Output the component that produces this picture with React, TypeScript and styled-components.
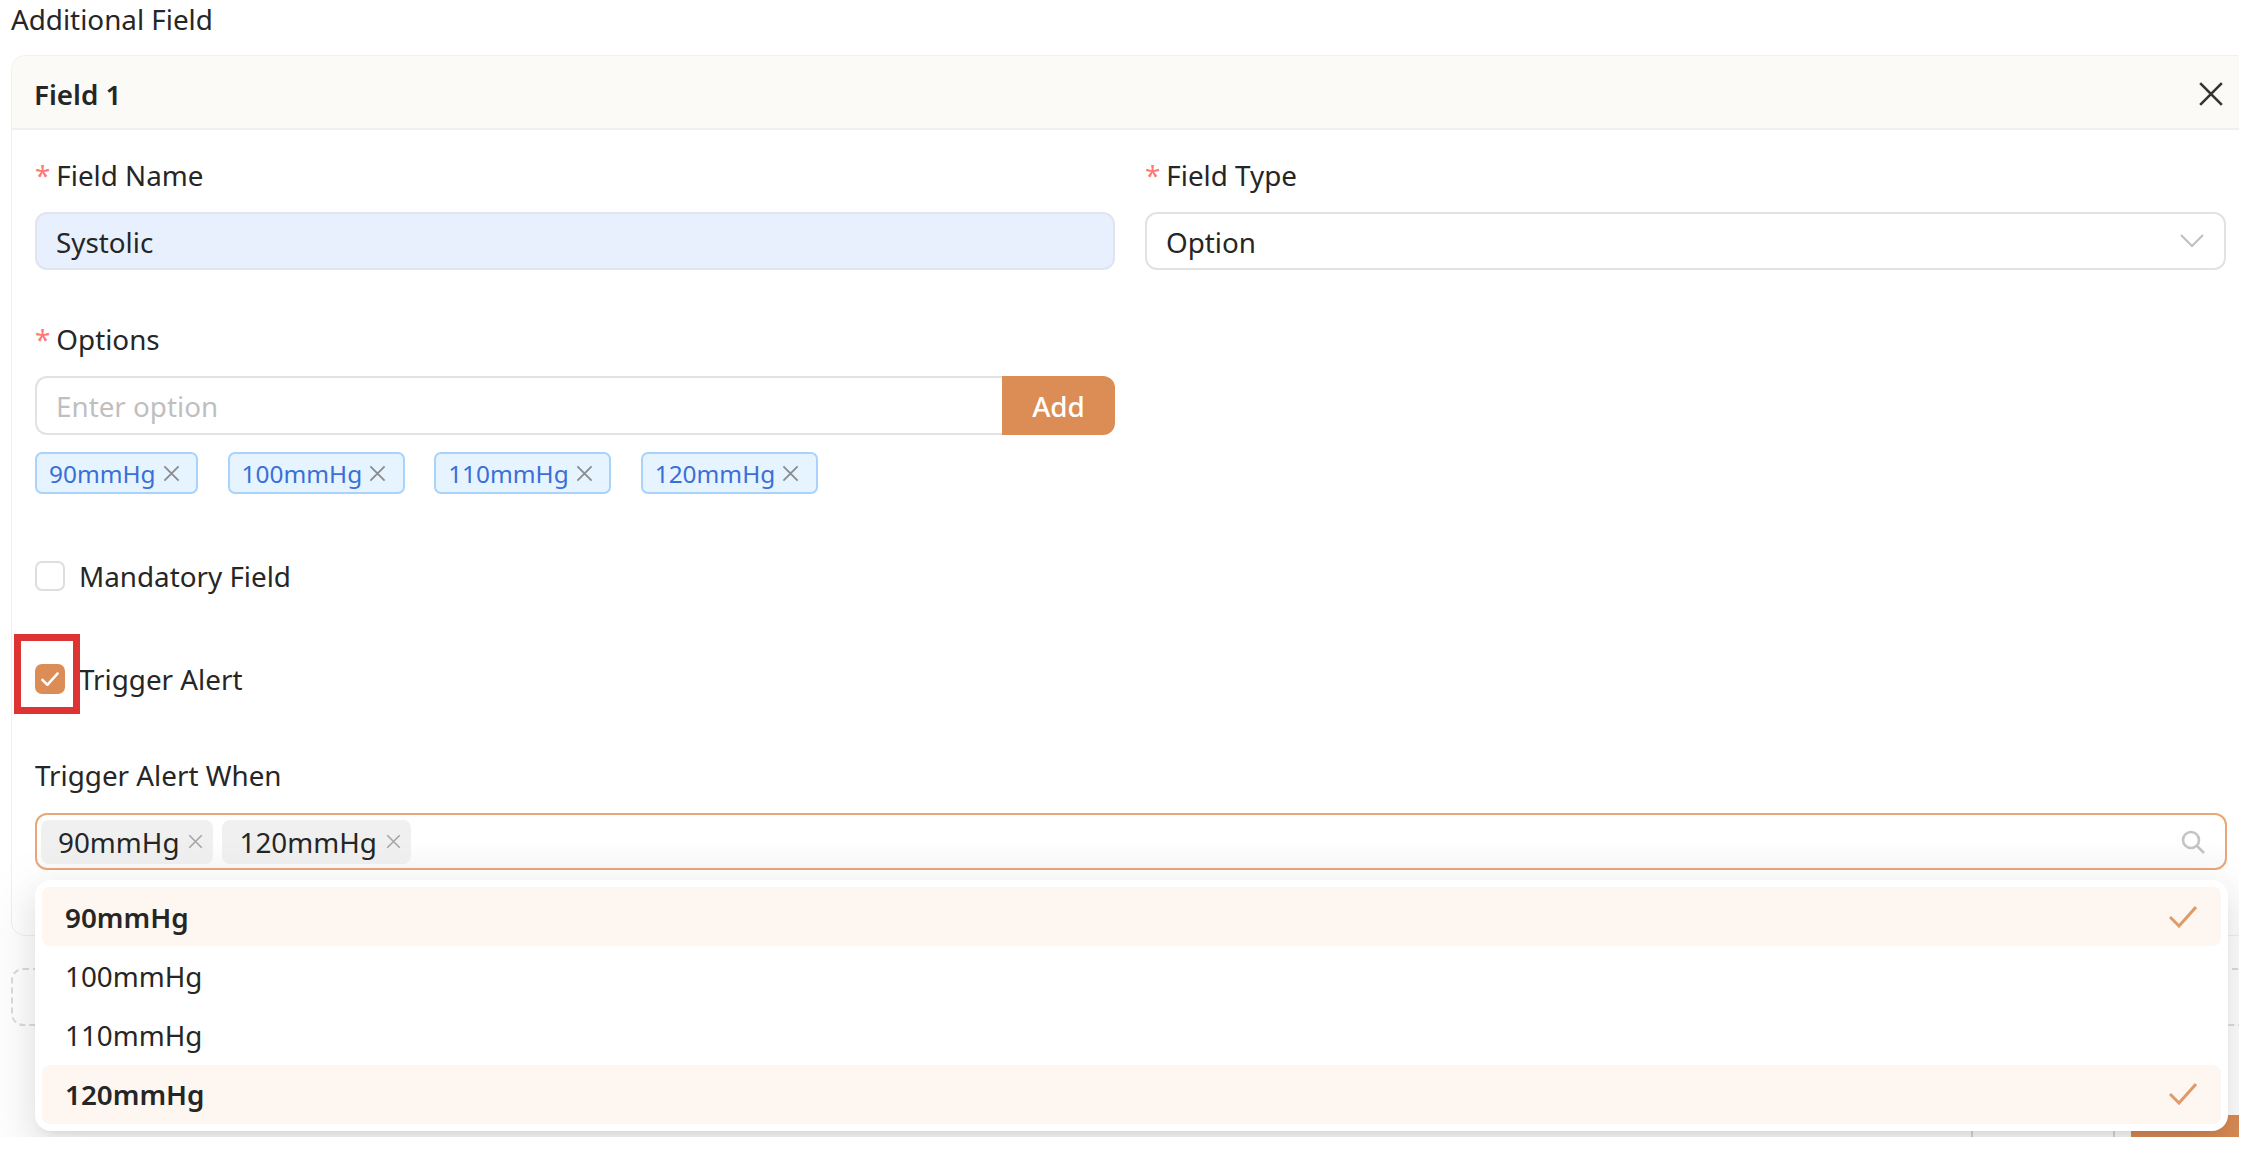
import React from 'react';
import styled, { createGlobalStyle } from 'styled-components';

const orange = '#dc8d55';

const GlobalStyle = createGlobalStyle`
  html, body {
    margin: 0;
    background: #fff;
    overflow: hidden;
  }
  * {
    box-sizing: border-box;
  }
`;

const Shot = styled.div`
  width: 2239px;
  height: 1137px;
  padding-left: 11px;
  overflow: hidden;
  font-family: 'Noto Sans', 'Open Sans', sans-serif;
  font-size: 27.8px;
  color: #262626;
`;

const Inner = styled.div`
  width: 2240px;
`;

const Title = styled.div`
  height: 38px;
  line-height: 38px;
  margin-bottom: 17px;
`;

const Card = styled.div`
  border: 1px solid #f0f0f0;
  border-radius: 14px;
`;

const CardHeader = styled.div`
  height: 74px;
  padding: 3px 26px 0 22px;
  display: flex;
  align-items: center;
  justify-content: space-between;
  background: #fbfaf6;
  border-bottom: 2px solid #f0f0f0;
  border-radius: 14px 14px 0 0;
  font-weight: 600;
`;

const CardBody = styled.div`
  padding: 27px 23px 65px;
`;

const TwoCols = styled.div`
  display: grid;
  grid-template-columns: 1080px 1081px;
  column-gap: 30px;
`;

const FormItem = styled.div`
  margin-bottom: 51px;
`;

const Label = styled.div`
  height: 36px;
  line-height: 36px;
  margin-bottom: 19px;
`;

const SelectLabel = styled(Label)`
  margin-bottom: 20px;
`;

const Required = styled.span`
  color: #ff7875;
  margin-right: 6px;
`;

const TextInput = styled.input<{ $filled?: boolean }>`
  display: block;
  width: 100%;
  height: 58px;
  padding: ${(p) => (p.$filled ? '2px' : '0')} 19px 0;
  border: 2px solid ${(p) => (p.$filled ? '#dfe5f0' : '#e2e2e2')};
  border-radius: 12px;
  background: ${(p) => (p.$filled ? '#e8f0fe' : '#fff')};
  font: inherit;
  color: inherit;
  outline: none;
  &::placeholder {
    color: #bfbfbf;
  }
`;

const SelectBox = styled.div`
  height: 58px;
  padding: 0 20px 0 19px;
  display: flex;
  align-items: center;
  justify-content: space-between;
  border: 2px solid #e2e2e2;
  border-radius: 12px;
`;

const SelectValue = styled.span`
  padding-top: 2px;
`;

const InputRow = styled.div`
  display: flex;
  height: 59px;
`;

const GroupInput = styled(TextInput)`
  flex: 1;
  height: 59px;
  border-right: 0;
  border-radius: 12px 0 0 12px;
`;

const AddButton = styled.button`
  width: 113px;
  border: 0;
  border-radius: 0 12px 12px 0;
  background: ${orange};
  color: #fff;
  font: inherit;
  font-weight: 500;
`;

const TagList = styled.div`
  display: flex;
  gap: 29.5px;
  margin-top: 17px;
`;

const Tag = styled.div`
  height: 42px;
  padding: 0 16.5px 0 12px;
  display: flex;
  align-items: center;
  gap: 7px;
  border: 2px solid #a9d3fb;
  border-radius: 7px;
  background: #e6f4ff;
  color: #3a6fd8;
  font-size: 24.4px;
`;

const CheckGroup = styled.div`
  padding-top: 16px;
`;

const CheckRow = styled.div<{ $gap: number }>`
  position: relative;
  display: flex;
  align-items: center;
  gap: 14px;
  height: 30px;
  margin-bottom: ${(p) => p.$gap}px;
`;

const CheckBox = styled.div<{ $checked?: boolean }>`
  width: 30px;
  height: 30px;
  display: flex;
  align-items: center;
  justify-content: center;
  border-radius: 7px;
  border: 2px solid ${(p) => (p.$checked ? orange : '#dedede')};
  background: ${(p) => (p.$checked ? orange : '#fff')};
`;

const RedMark = styled.div`
  position: absolute;
  left: -21px;
  top: -30px;
  width: 66px;
  height: 80px;
  border: 7px solid #dd3333;
`;

const SelectWrap = styled.div`
  position: relative;
`;

const MultiBox = styled.div`
  height: 57px;
  padding: 0 20px 0 4px;
  display: flex;
  align-items: center;
  gap: 9px;
  border: 2px solid #e9a678;
  border-radius: 12px;
  background: linear-gradient(#fff 50%, #fafafa);
`;

const Chip = styled.div`
  height: 44px;
  padding: 0 10px 0 17px;
  display: flex;
  align-items: center;
  gap: 9px;
  border-radius: 8px;
  background: #f0f0f0;
`;

const SearchSlot = styled.div`
  margin-left: auto;
  display: flex;
`;

const Dropdown = styled.div`
  position: absolute;
  top: calc(100% + 10px);
  left: 0;
  right: -1px;
  height: 251px;
  padding: 7px;
  display: flex;
  flex-direction: column;
  background: #fff;
  border-radius: 16px;
  box-shadow: 0 12px 32px rgba(0, 0, 0, 0.08), 0 6px 12px -8px rgba(0, 0, 0, 0.12),
    0 18px 56px 16px rgba(0, 0, 0, 0.05);
`;

const Option = styled.div<{ $selected?: boolean }>`
  flex: 1;
  padding: 0 24px 0 23px;
  display: flex;
  align-items: center;
  justify-content: space-between;
  border-radius: 8px;
  background: ${(p) => (p.$selected ? '#fef7f1' : 'transparent')};
  font-weight: ${(p) => (p.$selected ? 600 : 400)};
`;

const DashedButton = styled.div`
  height: 58px;
  margin-top: 32px;
  border: 2px dashed #dcdcdc;
  border-radius: 12px;
`;

const Footer = styled.div`
  display: flex;
  justify-content: flex-end;
  gap: 16px;
  margin-top: 89px;
  height: 60px;
`;

const OutlineButton = styled.div`
  width: 144px;
  border: 2px solid #d9d9d9;
  border-radius: 12px;
`;

const PrimaryButton = styled.div`
  width: 120px;
  background: ${orange};
  border-radius: 12px;
`;

const CloseIcon = ({ size, color, width }: { size: number; color: string; width: number }) => (
  <svg width={size} height={size} viewBox="0 0 24 24" fill="none" stroke={color} strokeWidth={width}>
    <path d="M2 2 22 22M22 2 2 22" />
  </svg>
);

const ChevronIcon = () => (
  <svg width="24" height="14" viewBox="0 0 24 14" fill="none" stroke="#bfbfbf" strokeWidth="2">
    <path d="M1 1 12 12 23 1" />
  </svg>
);

const SearchIcon = () => (
  <svg width="24" height="24" viewBox="0 0 24 24" fill="none" stroke="#c4c4c4" strokeWidth="2.6">
    <circle cx="10" cy="10" r="8" />
    <path d="M15.5 15.5 23 23" />
  </svg>
);

const CheckIcon = ({ size, color, width }: { size: number; color: string; width: number }) => (
  <svg width={size} height={(size * 22) / 28} viewBox="0 0 28 22" fill="none" stroke={color} strokeWidth={width}>
    <path d="M1 11 10 20 27 1" />
  </svg>
);

const optionTags = ['90mmHg', '100mmHg', '110mmHg', '120mmHg'];
const selected = ['90mmHg', '120mmHg'];

export default function App() {
  return (
    <Shot>
      <GlobalStyle />
      <Inner>
        <Title>Additional Field</Title>
        <Card>
          <CardHeader>
            Field 1
            <CloseIcon size={26} color="#333" width={2.4} />
          </CardHeader>
          <CardBody>
            <TwoCols>
              <FormItem>
                <Label>
                  <Required>*</Required>Field Name
                </Label>
                <TextInput $filled readOnly value="Systolic" />
              </FormItem>
              <FormItem>
                <Label>
                  <Required>*</Required>Field Type
                </Label>
                <SelectBox>
                  <SelectValue>Option</SelectValue>
                  <ChevronIcon />
                </SelectBox>
              </FormItem>
              <FormItem>
                <Label>
                  <Required>*</Required>Options
                </Label>
                <InputRow>
                  <GroupInput readOnly placeholder="Enter option" />
                  <AddButton>Add</AddButton>
                </InputRow>
                <TagList>
                  {optionTags.map((t) => (
                    <Tag key={t}>
                      {t}
                      <CloseIcon size={17} color="#8c8c8c" width={2.6} />
                    </Tag>
                  ))}
                </TagList>
              </FormItem>
            </TwoCols>
            <CheckGroup>
              <CheckRow $gap={73}>
                <CheckBox />
                Mandatory Field
              </CheckRow>
              <CheckRow $gap={63}>
                <CheckBox $checked>
                  <CheckIcon size={18} color="#fff" width={4} />
                </CheckBox>
                Trigger Alert
                <RedMark />
              </CheckRow>
            </CheckGroup>
            <SelectLabel>Trigger Alert When</SelectLabel>
            <SelectWrap>
              <MultiBox>
                {selected.map((t) => (
                  <Chip key={t}>
                    {t}
                    <CloseIcon size={15} color="#a6a6a6" width={2.6} />
                  </Chip>
                ))}
                <SearchSlot>
                  <SearchIcon />
                </SearchSlot>
              </MultiBox>
              <Dropdown>
                {optionTags.map((t) => (
                  <Option key={t} $selected={selected.includes(t)}>
                    {t}
                    {selected.includes(t) && <CheckIcon size={28} color="#e09a68" width={3} />}
                  </Option>
                ))}
              </Dropdown>
            </SelectWrap>
          </CardBody>
        </Card>
        <DashedButton />
        <Footer>
          <OutlineButton />
          <PrimaryButton />
        </Footer>
      </Inner>
    </Shot>
  );
}
